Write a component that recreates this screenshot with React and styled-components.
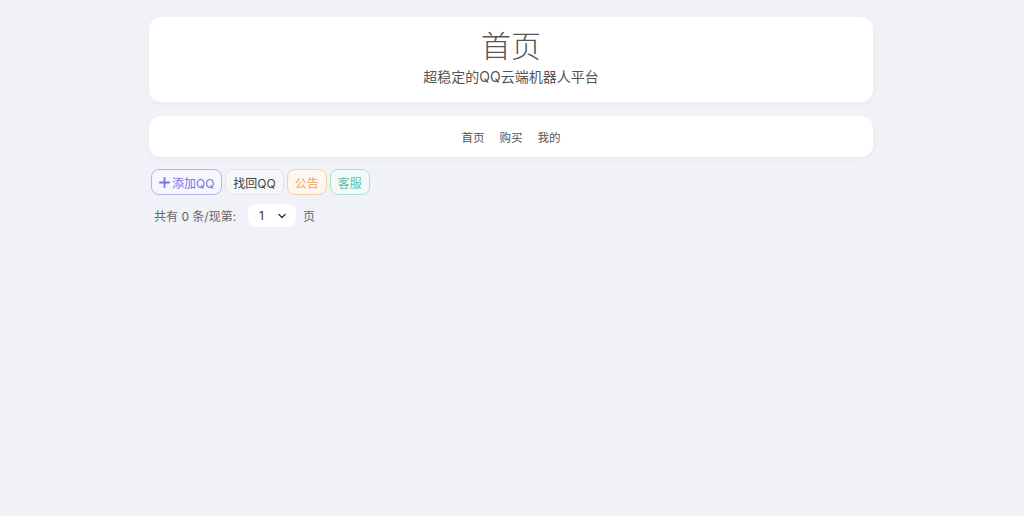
import React from "react";
import styled, { createGlobalStyle } from "styled-components";

const GlobalStyle = createGlobalStyle`
    html, body {
        margin: 0;
        padding: 0;
        background: #f1f2f7;
        font-family: "Inter", "Noto Sans CJK SC", sans-serif;
        color: #555;
    }
`

const Page = styled.div`
    width: 724px;
    margin: 0 auto;
    padding-top: 17px;
    min-height: 499px;
    transform: translateX(-1px);
`

const HeaderCard = styled.div`
    background: #fff;
    border-radius: 12px;
    box-shadow: 0 2px 6px rgba(0, 0, 0, 0.04);
    height: 85px;
    display: flex;
    flex-direction: column;
    align-items: center;
    box-sizing: border-box;
    padding-top: 9px;
`

const Title = styled.h1`
    margin: 0;
    font-size: 30px;
    font-weight: 300;
    line-height: 40px;
    color: #555;
`

const Subtitle = styled.p`
    margin: 1px 0 0;
    font-size: 14px;
    line-height: 20px;
    color: #555;
`

const NavCard = styled.nav`
    margin-top: 14px;
    background: #fff;
    border-radius: 12px;
    box-shadow: 0 2px 6px rgba(0, 0, 0, 0.04);
    height: 41px;
    display: flex;
    justify-content: center;
    align-items: center;
    gap: 15px;
`

const NavLink = styled.a`
    font-size: 11.5px;
    color: #555;
    text-decoration: none;
`

const ActionRow = styled.div`
    margin-top: 12px;
    padding-left: 2px;
    display: flex;
    gap: 3px;
`

const palette = {
    primary: { border: "#b3b4f5", text: "#7577e4", bg: "#f6f6ff" },
    plain: { border: "#e2e3e8", text: "#444", bg: "#f6f6f8" },
    warning: { border: "#f4d1a6", text: "#f0a65a", bg: "#fdf7f0" },
    info: { border: "#aee0d8", text: "#5cbfad", bg: "#f2faf8" },
}

const ActionButton = styled.button`
    height: 26px;
    padding: 0 7px;
    border-radius: 8px;
    border: 1px solid ${p => palette[p.$kind].border};
    background: ${p => palette[p.$kind].bg};
    color: ${p => palette[p.$kind].text};
    font-family: "Inter", "Noto Sans CJK SC", sans-serif;
    font-size: 12px;
    font-weight: 400;
    display: flex;
    align-items: center;
    gap: 2px;
    cursor: pointer;
`

const PagerRow = styled.div`
    margin-top: 9px;
    padding-left: 5px;
    display: flex;
    align-items: center;
    font-size: 12px;
    color: #666;
`

const Select = styled.div`
    margin-left: 12px;
    width: 48px;
    height: 23px;
    background: #fff;
    border-radius: 8px;
    display: flex;
    align-items: center;
    justify-content: space-between;
    box-sizing: border-box;
    padding: 0 9px 0 11px;
    color: #333;
    font-size: 12px;
`

const PageUnit = styled.span`
    margin-left: 7px;
`

function App() {
    return (
        <>
            <GlobalStyle />
            <Page>
                <HeaderCard>
                    <Title>首页</Title>
                    <Subtitle>超稳定的QQ云端机器人平台</Subtitle>
                </HeaderCard>

                <NavCard>
                    <NavLink>首页</NavLink>
                    <NavLink>购买</NavLink>
                    <NavLink>我的</NavLink>
                </NavCard>

                <ActionRow>
                    <ActionButton $kind="primary">
                        <svg width="11" height="11" viewBox="0 0 12 12">
                            <path d="M6 1v10M1 6h10" stroke="currentColor" strokeWidth="2" strokeLinecap="round" />
                        </svg>
                        添加QQ
                    </ActionButton>
                    <ActionButton $kind="plain">找回QQ</ActionButton>
                    <ActionButton $kind="warning">公告</ActionButton>
                    <ActionButton $kind="info">客服</ActionButton>
                </ActionRow>

                <PagerRow>
                    共有 0 条/现第:
                    <Select>
                        1
                        <svg width="10" height="10" viewBox="0 0 10 10">
                            <path d="M2 3.5l3 3 3-3" fill="none" stroke="#333" strokeWidth="1.3" strokeLinecap="round" strokeLinejoin="round" />
                        </svg>
                    </Select>
                    <PageUnit>页</PageUnit>
                </PagerRow>
            </Page>
        </>
    )
}

export default App
